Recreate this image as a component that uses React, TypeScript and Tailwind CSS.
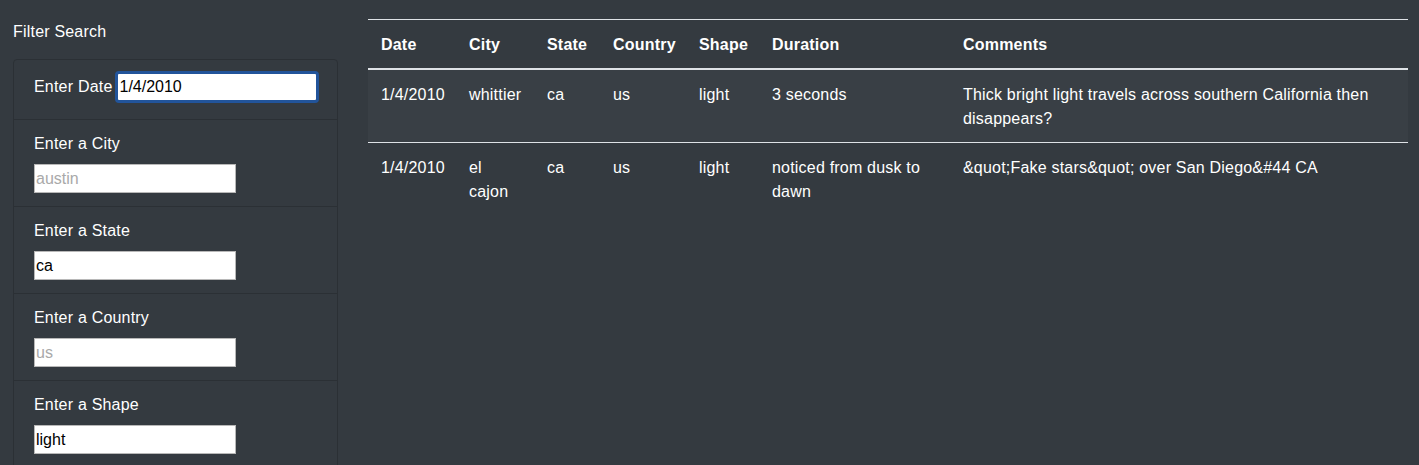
import React from 'react';

type Sighting = {
  datetime: string;
  city: string[];
  state: string;
  country: string;
  shape: string;
  duration: string;
  comments: string;
};

const rows: Sighting[] = [
  {
    datetime: '1/4/2010',
    city: ['whittier'],
    state: 'ca',
    country: 'us',
    shape: 'light',
    duration: '3 seconds',
    comments: 'Thick bright light travels across southern California then disappears?',
  },
  {
    datetime: '1/4/2010',
    city: ['el', 'cajon'],
    state: 'ca',
    country: 'us',
    shape: 'light',
    duration: 'noticed from dusk to dawn',
    comments: '&quot;Fake stars&quot; over San Diego&#44 CA',
  },
];

const filters = [
  { label: 'Enter a City', value: '', placeholder: 'austin' },
  { label: 'Enter a State', value: 'ca', placeholder: '' },
  { label: 'Enter a Country', value: '', placeholder: 'us' },
  { label: 'Enter a Shape', value: 'light', placeholder: '' },
];

const font = { fontFamily: '"Liberation Sans", Arial, sans-serif' };

export default function App() {
  return (
    <div className="w-[1419px] h-[465px] overflow-hidden bg-[#343a40] text-white flex tracking-[0.2px]" style={font}>
      <aside className="w-[355px] pl-[13px] pr-[17px] shrink-0">
        <h5 className="text-[16px] leading-6 pt-[20px] pb-[15px]">Filter Search</h5>
        <ul className="border border-[#2b3035] rounded-t-[4px]">
          <li className="flex items-center px-5 pt-[11px] pb-[16px] border-b border-[#2b3035]">
            <label className="text-[16px] leading-6 pr-[3px] whitespace-nowrap shrink-0">Enter Date</label>
            <input
              readOnly
              value="1/4/2010"
              className="w-[204px] h-[32px] shrink-0 bg-white text-black text-[16px] px-[1px] border-[3px] border-[#22549a] rounded-[4px] outline-none tracking-normal"
              style={font}
            />
          </li>
          {filters.map((f) => (
            <li key={f.label} className="px-5 pt-[12px] pb-[13px] border-b border-[#2b3035] last:border-b-0">
              <label className="block text-[16px] leading-6 mb-[8px]">{f.label}</label>
              <input
                readOnly
                value={f.value}
                placeholder={f.placeholder}
                className="block w-[202px] h-[29px] bg-white text-black text-[16px] px-[1px] border border-[#b8b8b8] placeholder:text-[#a9a9a9] outline-none tracking-normal"
                style={font}
              />
            </li>
          ))}
        </ul>
      </aside>
      <main className="pl-[13px] pt-[19px]">
        <table className="w-[1040px] table-fixed border-collapse text-[16px] leading-6">
          <colgroup>
            <col className="w-[88px]" />
            <col className="w-[78px]" />
            <col className="w-[66px]" />
            <col className="w-[86px]" />
            <col className="w-[73px]" />
            <col className="w-[191px]" />
            <col className="w-[458px]" />
          </colgroup>
          <thead>
            <tr className="border-t border-[#dee2e6]">
              {['Date', 'City', 'State', 'Country', 'Shape', 'Duration', 'Comments'].map((h) => (
                <th key={h} className="text-left font-bold px-[13px] pt-[13px] pb-[11px] border-b-2 border-[#dee2e6]">
                  {h}
                </th>
              ))}
            </tr>
          </thead>
          <tbody>
            {rows.map((r, i) => {
              const cell = `align-top px-[13px] pt-[13px] pb-[11px] ${i > 0 ? 'border-t border-[#dee2e6]' : ''}`;
              return (
                <tr key={i} className={i % 2 === 0 ? 'bg-[#393f45]' : ''}>
                  <td className={cell}>{r.datetime}</td>
                  <td className={cell}>
                    {r.city.map((c) => (
                      <div key={c}>{c}</div>
                    ))}
                  </td>
                  <td className={cell}>{r.state}</td>
                  <td className={cell}>{r.country}</td>
                  <td className={cell}>{r.shape}</td>
                  <td className={cell}>{r.duration}</td>
                  <td className={cell}>{r.comments}</td>
                </tr>
              );
            })}
          </tbody>
        </table>
      </main>
    </div>
  );
}
